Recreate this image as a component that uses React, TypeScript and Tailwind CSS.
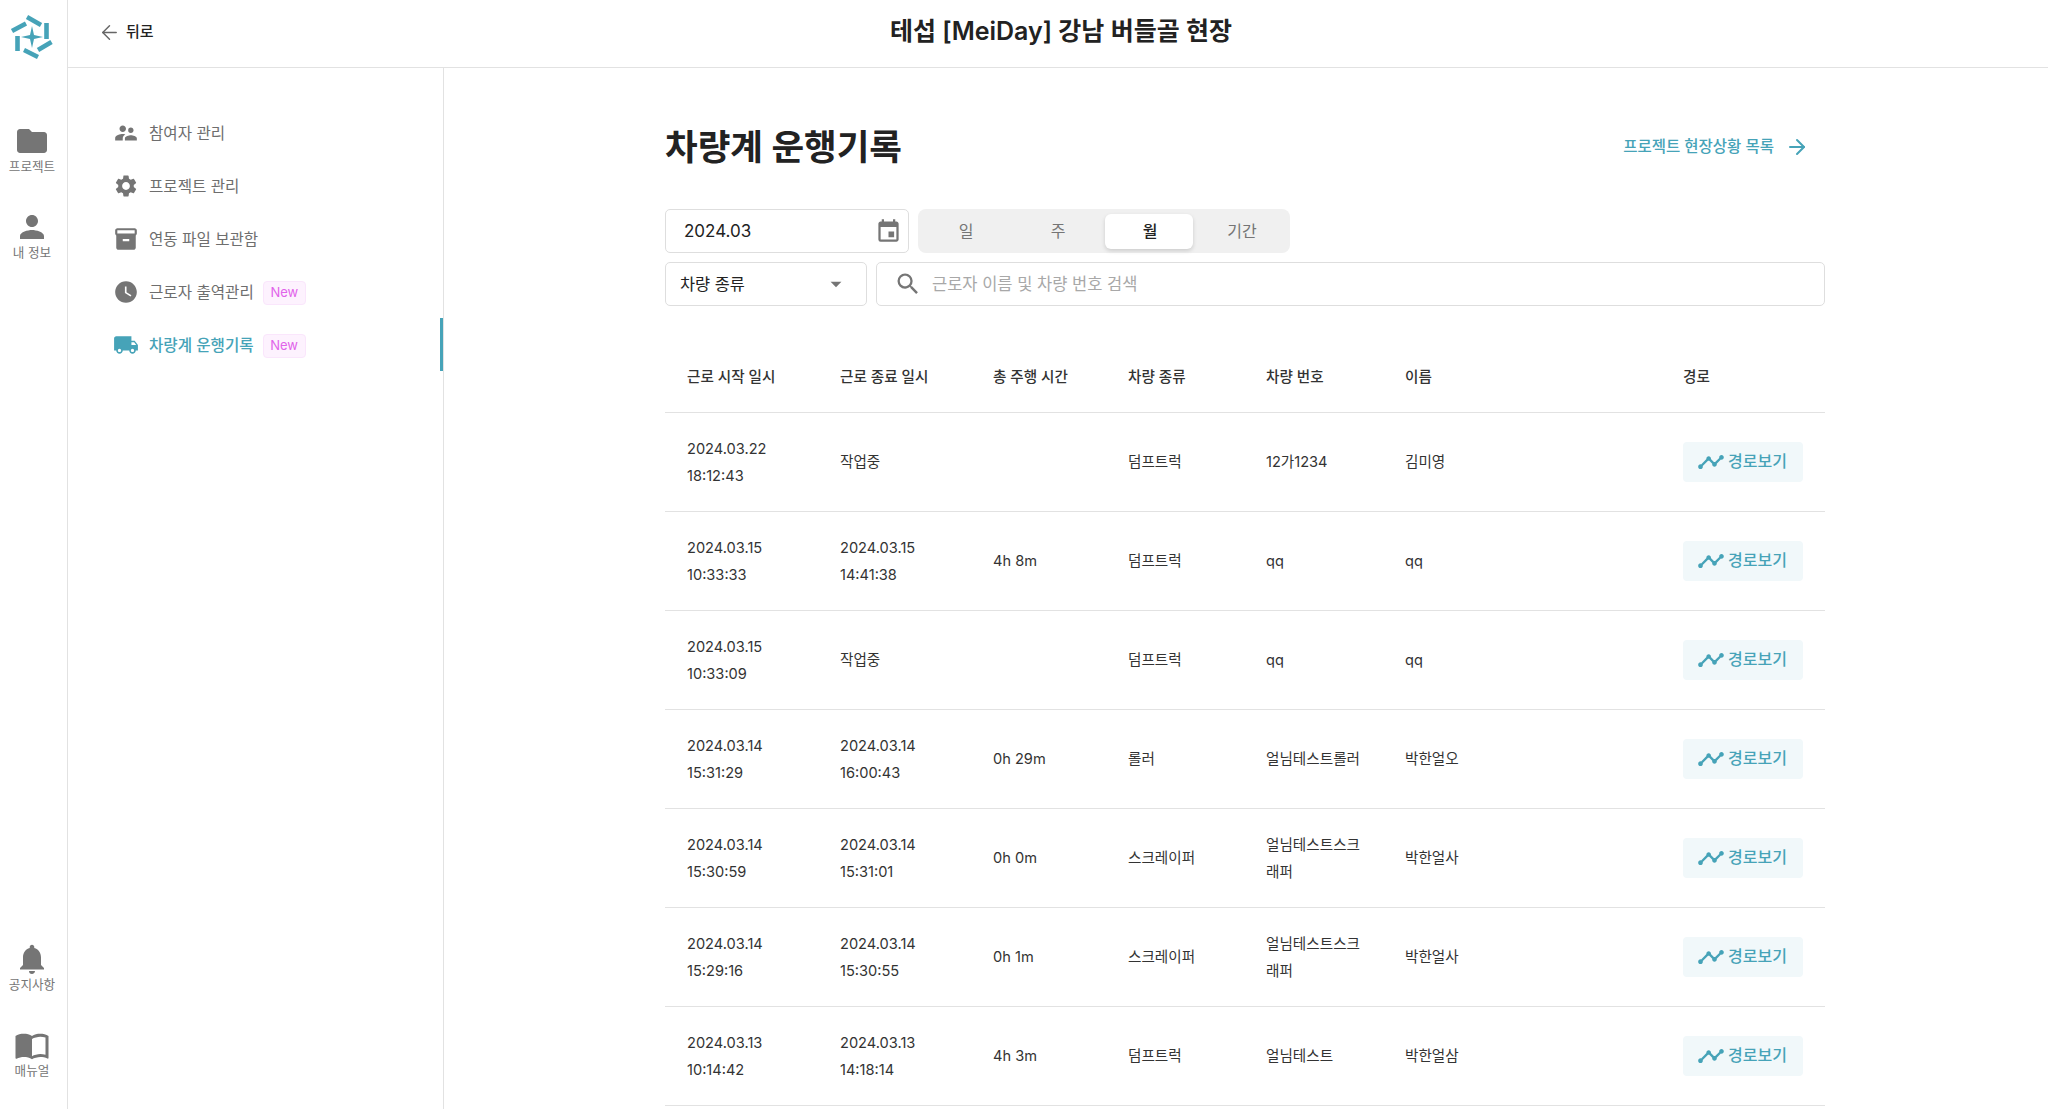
import { ArrowLeft, ArrowRight } from "lucide-react"
import {
  MdArrowDropDown,
  MdEvent,
  MdFolder,
  MdImportContacts,
  MdInventory2,
  MdLocalShipping,
  MdNotifications,
  MdPerson,
  MdSearch,
  MdSettings,
  MdSupervisorAccount,
  MdTimeline,
  MdWatchLater,
} from "react-icons/md"

const rows = [
  { start: ["2024.03.22", "18:12:43"], end: ["작업중"], total: "", kind: "덤프트럭", plate: "12가1234", name: "김미영" },
  { start: ["2024.03.15", "10:33:33"], end: ["2024.03.15", "14:41:38"], total: "4h 8m", kind: "덤프트럭", plate: "qq", name: "qq" },
  { start: ["2024.03.15", "10:33:09"], end: ["작업중"], total: "", kind: "덤프트럭", plate: "qq", name: "qq" },
  { start: ["2024.03.14", "15:31:29"], end: ["2024.03.14", "16:00:43"], total: "0h 29m", kind: "롤러", plate: "얼님테스트롤러", name: "박한얼오" },
  { start: ["2024.03.14", "15:30:59"], end: ["2024.03.14", "15:31:01"], total: "0h 0m", kind: "스크레이퍼", plate: "얼님테스트스크래퍼", name: "박한얼사" },
  { start: ["2024.03.14", "15:29:16"], end: ["2024.03.14", "15:30:55"], total: "0h 1m", kind: "스크레이퍼", plate: "얼님테스트스크래퍼", name: "박한얼사" },
  { start: ["2024.03.13", "10:14:42"], end: ["2024.03.13", "14:18:14"], total: "4h 3m", kind: "덤프트럭", plate: "얼님테스트", name: "박한얼삼" },
]

const menu = [
  { label: "참여자 관리", icon: MdSupervisorAccount },
  { label: "프로젝트 관리", icon: MdSettings },
  { label: "연동 파일 보관함", icon: MdInventory2 },
  { label: "근로자 출역관리", icon: MdWatchLater, badge: true },
  { label: "차량계 운행기록", icon: MdLocalShipping, badge: true, active: true },
]

function Logo() {
  return (
    <svg width="70" height="70" viewBox="0 0 70 70" className="text-[#46a3b8]">
      <g stroke="currentColor" strokeWidth="4.6">
        <line x1="27" y1="17" x2="41" y2="25" />
        <line x1="46.5" y1="23" x2="46.5" y2="39" />
        <line x1="38" y1="50" x2="51.5" y2="42" />
        <line x1="24" y1="50" x2="38" y2="57" />
        <line x1="17.5" y1="36" x2="17.5" y2="51" />
        <line x1="12" y1="31" x2="26" y2="23.5" />
      </g>
      <path d="M32 26 L34 35 L43 37 L34 39 L32 48 L30 39 L21 37 L30 35 Z" fill="currentColor" />
    </svg>
  )
}

function RailItem({ icon: Icon, label, size = 36 }: { icon: typeof MdFolder; label: string; size?: number }) {
  return (
    <div className="flex h-[86px] flex-col items-center pr-[3px]">
      <Icon size={size} className="text-[#757575]" />
      <span className="text-[12.6px] leading-[16px] text-[#757575]">{label}</span>
    </div>
  )
}

function NewBadge() {
  return (
    <span className="ml-[9px] mt-[2px] flex h-[24px] w-[43px] items-center justify-center rounded-[4px] border border-[#fae6fc] bg-[#fdf2fe] text-[13px] text-[#e163ea]">
      New
    </span>
  )
}

function Stacked({ lines }: { lines: string[] }) {
  return (
    <>
      {lines.map((line) => (
        <div key={line}>{line}</div>
      ))}
    </>
  )
}

export default function App() {
  return (
    <div className="flex h-screen overflow-hidden bg-white font-['Inter','Noto_Sans_CJK_KR',sans-serif] text-[#333333]">
      {/* Left rail */}
      <aside className="flex w-[68px] shrink-0 flex-col justify-between border-r border-[#e2e2e2]">
        <div>
          <Logo />
          <div className="mt-[53px]">
            <RailItem icon={MdFolder} label="프로젝트" />
            <RailItem icon={MdPerson} label="내 정보" />
          </div>
        </div>
        <div className="-mb-[4px]">
          <RailItem icon={MdNotifications} label="공지사항" />
          <RailItem icon={MdImportContacts} label="매뉴얼" />
        </div>
      </aside>

      <div className="flex min-w-0 flex-1 flex-col">
        {/* Top bar */}
        <header className="grid h-[68px] shrink-0 grid-cols-[1fr_auto_1fr] items-center border-b border-[#e2e2e2] pb-[3px]">
          <div className="flex items-center pl-[30px]">
            <ArrowLeft size={23} strokeWidth={1.5} className="text-[#666666]" />
            <span className="ml-[5px] text-[15px] font-medium text-[#222222]">뒤로</span>
          </div>
          <h1 className="pl-[6px] text-[25px] font-semibold text-[#222222]">테섭 [MeiDay] 강남 버들골 현장</h1>
          <div />
        </header>

        <div className="flex min-h-0 flex-1">
          {/* Sidebar */}
          <nav className="w-[376px] shrink-0 border-r border-[#e2e2e2] pt-[38px]">
            {menu.map((item) => (
              <div key={item.label} className="relative flex h-[53px] items-center pl-[45px]">
                <item.icon size={26} className={item.active ? "text-[#46a3b8]" : "text-[#757575]"} />
                <span className={`ml-[10px] pt-[2px] text-[15.6px] ${item.active ? "font-medium text-[#46a3b8]" : "text-[#6e6e6e]"}`}>
                  {item.label}
                </span>
                {item.badge && <NewBadge />}
                {item.active && <span className="absolute right-0 top-0 h-full w-[3px] bg-[#46a3b8]" />}
              </div>
            ))}
          </nav>

          {/* Main */}
          <main className="min-w-0 flex-1 pl-[221px]">
            <div className="w-[1160px]">
              <div className="flex h-[141px] items-start justify-between pt-[55px]">
                <h2 className="text-[35.5px] font-bold leading-[50px] text-[#222222]">차량계 운행기록</h2>
                <a className="mr-[16px] mt-[12px] flex items-center text-[15.5px] font-medium text-[#46a3b8]">
                  프로젝트 현장상황 목록
                  <ArrowRight size={24} strokeWidth={2} className="ml-[11px]" />
                </a>
              </div>

              <div className="flex gap-[9px]">
                <div className="flex h-[44px] w-[244px] items-center justify-between rounded-[5px] border border-[#dedede] pl-[18px] pr-[6px] text-[17px] text-[#222222]">
                  <span className="pt-[2px]">2024.03</span>
                  <MdEvent size={27} className="text-[#757575]" />
                </div>
                <div className="flex h-[44px] items-center rounded-[8px] bg-[#f0f0f0] pl-[1px] pr-[3px]">
                  {["일", "주", "월", "기간"].map((tab) => (
                    <div key={tab} className="flex w-[92px] justify-center px-[2px]">
                      {tab === "월" ? (
                        <div className="flex h-[35px] w-full items-center justify-center rounded-[6px] bg-white pl-[2px] text-[16px] font-medium text-[#222222] shadow-[0_2px_4px_rgba(0,0,0,0.15)]">
                          {tab}
                        </div>
                      ) : (
                        <div className="flex h-[35px] w-full items-center justify-center pl-[2px] text-[16px] text-[#757575]">{tab}</div>
                      )}
                    </div>
                  ))}
                </div>
              </div>

              <div className="mt-[9px] flex gap-[9px]">
                <div className="flex h-[44px] w-[202px] items-center justify-between rounded-[5px] border border-[#dedede] pl-[14px] pr-[17px] text-[16.4px] text-[#222222]">
                  차량 종류
                  <MdArrowDropDown size={26} className="text-[#757575]" />
                </div>
                <div className="flex h-[44px] flex-1 items-center rounded-[5px] border border-[#dedede] pl-[17px]">
                  <MdSearch size={28} className="text-[#757575]" />
                  <span className="ml-[10px] text-[16.5px] text-[#a8a8a8]">근로자 이름 및 차량 번호 검색</span>
                </div>
              </div>

              <table className="mt-[38px] w-full table-fixed border-collapse text-[14.6px] leading-[27px]">
                <colgroup>
                  <col className="w-[153px]" />
                  <col className="w-[153px]" />
                  <col className="w-[135px]" />
                  <col className="w-[138px]" />
                  <col className="w-[139px]" />
                  <col className="w-[278px]" />
                  <col className="w-[164px]" />
                </colgroup>
                <thead>
                  <tr className="h-[68px] border-b border-[#e2e2e2] text-left">
                    {["근로 시작 일시", "근로 종료 일시", "총 주행 시간", "차량 종류", "차량 번호", "이름", "경로"].map((head) => (
                      <th key={head} className="px-[22px] font-medium text-[#333333]">
                        {head}
                      </th>
                    ))}
                  </tr>
                </thead>
                <tbody>
                  {rows.map((row) => (
                    <tr key={row.start.join()} className="h-[99px] border-b border-[#e2e2e2]">
                      <td className="px-[22px] pt-[2px]"><Stacked lines={row.start} /></td>
                      <td className="px-[22px] pt-[2px]"><Stacked lines={row.end} /></td>
                      <td className="px-[22px] pt-[2px]">{row.total}</td>
                      <td className="px-[22px] pt-[2px]">{row.kind}</td>
                      <td className="px-[22px] pt-[2px]">{row.plate}</td>
                      <td className="px-[22px] pt-[2px]">{row.name}</td>
                      <td className="px-[22px]">
                        <div className="flex h-[40px] w-[120px] items-center justify-center rounded-[4px] bg-[#f1f8fa] pr-[2px] text-[16px] font-medium text-[#46a3b8]">
                          <MdTimeline size={28} className="mr-[3px]" />
                          경로보기
                        </div>
                      </td>
                    </tr>
                  ))}
                </tbody>
              </table>
            </div>
          </main>
        </div>
      </div>
    </div>
  )
}
